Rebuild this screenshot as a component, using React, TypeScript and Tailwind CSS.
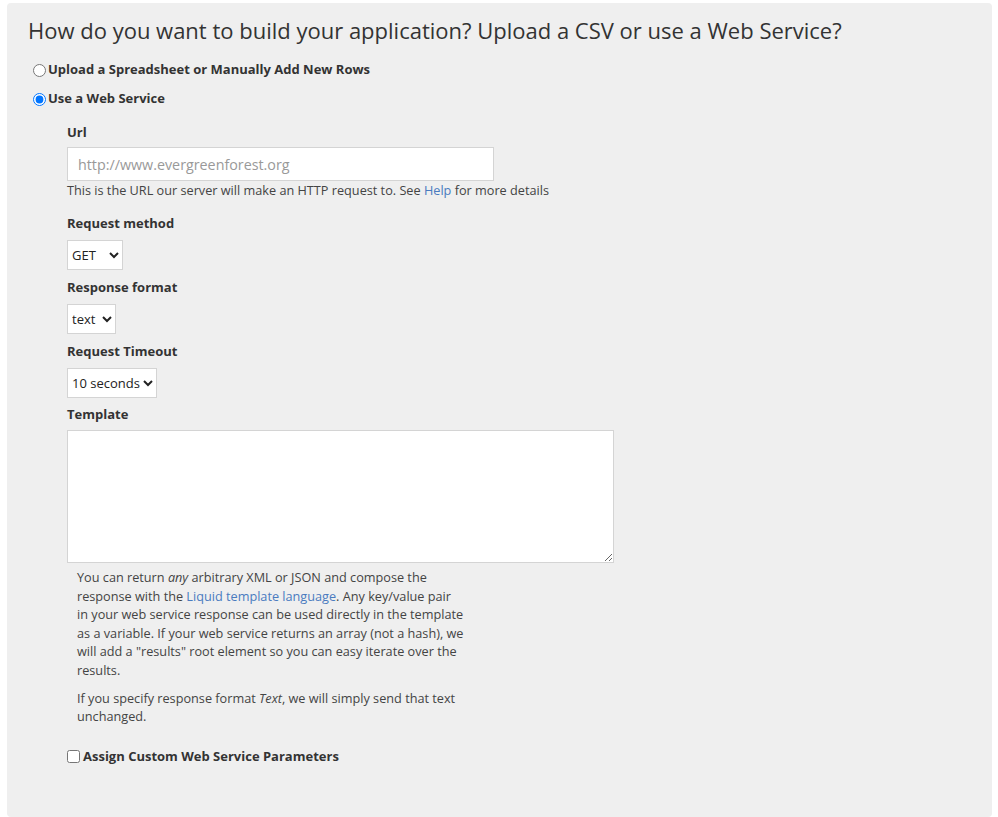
import React from "react";

const font = { fontFamily: '"Open Sans", "Liberation Sans", sans-serif' };

function Field({ label, className = "mb-[8px]", children }: { label: string; className?: string; children: React.ReactNode }) {
  return (
    <div className={className}>
      <label className="block text-[13px] font-bold text-[#333] leading-[18px] mb-[8px]">{label}</label>
      {children}
    </div>
  );
}

export default function App() {
  return (
    <div className="min-h-[817px] bg-white pt-[3px] pl-[7px] pr-[6px]" style={font}>
      <div className="bg-[#efefef] rounded-[4px] min-h-[814px] pl-[21px] pt-[11px] text-[#333]">
        <h2 className="text-[22px] leading-[32px] font-normal text-[#333] mb-[15px]">
          How do you want to build your application? Upload a CSV or use a Web Service?
        </h2>

        <div className="flex items-center h-[18px] mb-[11px]">
          <input type="radio" name="mode" className="ml-[5px] mr-[2px] my-0 w-[13px] h-[13px]" />
          <span className="text-[13px] font-bold">Upload a Spreadsheet or Manually Add New Rows</span>
        </div>
        <div className="flex items-center h-[18px] mb-[15px]">
          <input type="radio" name="mode" defaultChecked className="ml-[5px] mr-[2px] my-0 w-[13px] h-[13px]" />
          <span className="text-[13px] font-bold">Use a Web Service</span>
        </div>

        <div className="pl-[39px]">
          <div className="mb-[15px]">
            <label className="block text-[13px] font-bold leading-[18px] mb-[6px]">Url</label>
            <input
              type="text"
              placeholder="http://www.evergreenforest.org"
              className="block w-[427px] h-[34px] bg-white border border-[#d4d4d4] px-[10px] text-[14.3px] text-[#333] placeholder:text-[#999] outline-none"
            />
            <p className="text-[12.7px] text-[#444] leading-[18px]">
              This is the URL our server will make an HTTP request to. See{" "}
              <a className="text-[#4a7bbf]">Help</a> for more details
            </p>
          </div>

          <Field label="Request method">
            <select className="w-[56px] h-[30px] bg-white border border-[#d4d4d4] rounded-none text-[13px] text-[#222] pl-0">
              <option>GET</option>
              <option>POST</option>
            </select>
          </Field>

          <Field label="Response format">
            <select className="w-[49px] h-[30px] bg-white border border-[#d4d4d4] rounded-none text-[13px] text-[#222] pl-0">
              <option>text</option>
              <option>json</option>
              <option>xml</option>
            </select>
          </Field>

          <Field label="Request Timeout" className="mb-[7px]">
            <select className="w-[90px] h-[30px] bg-white border border-[#d4d4d4] rounded-none text-[13px] text-[#222] pl-0">
              <option>10 seconds</option>
              <option>30 seconds</option>
            </select>
          </Field>

          <div>
            <label className="block text-[13px] font-bold leading-[18px] mb-[7px]">Template</label>
            <textarea className="block w-[547px] h-[133px] bg-white border border-[#d4d4d4] outline-none" />
          </div>

          <div className="w-[402px] pl-[10px] pt-[5px] text-[12.7px] leading-[18.6px] text-[#444]">
            <p className="mb-[9px]">
              You can return <em>any</em> arbitrary XML or JSON and compose the response with the{" "}
              <a className="text-[#4a7bbf]">Liquid template language</a>. Any key/value pair
              <br />
              in your web service response can be used directly in the template as a variable. If your web service
              returns an array (not a hash), we will add a "results" root element so you can easy iterate over the
              results.
            </p>
            <p>
              If you specify response format <em>Text</em>, we will simply send that text unchanged.
            </p>
          </div>

          <div className="flex items-center h-[18px] mt-[22px]">
            <input type="checkbox" className="m-0 mr-[3px] w-[13px] h-[13px]" />
            <span className="text-[13px] font-bold">Assign Custom Web Service Parameters</span>
          </div>
        </div>
      </div>
    </div>
  );
}
